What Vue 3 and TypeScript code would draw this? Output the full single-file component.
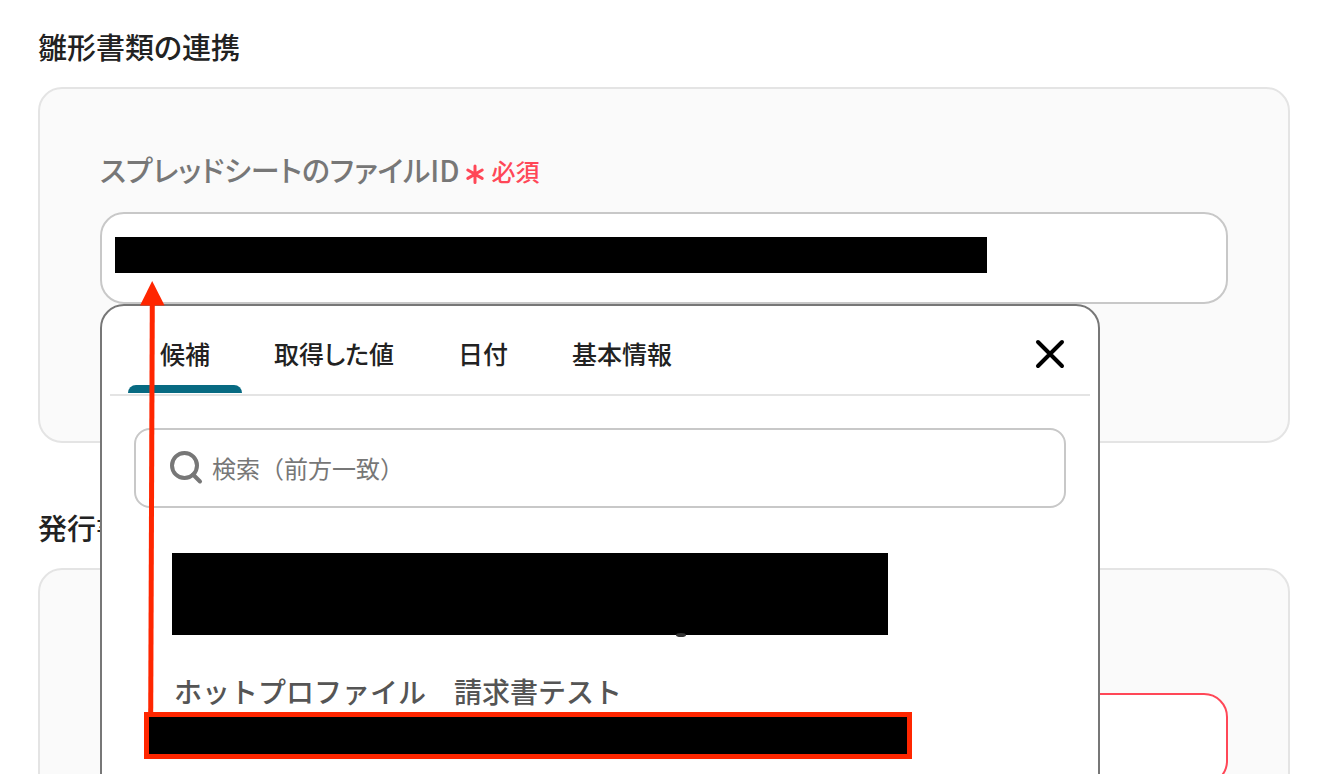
<script setup lang="ts">
import { ref } from 'vue'

const tabs: string[] = ['候補', '取得した値', '日付', '基本情報']
const activeTab = ref<string>('候補')
const fileId = ref<string>('')
const issueValue = ref<string>('')
const keyword = ref<string>('')
const open = ref<boolean>(true)
</script>

<template>
  <main class="page">
    <section class="section">
      <h2 class="heading">雛形書類の連携</h2>
      <div class="panel">
        <div class="label-row">
          <label for="file-id" class="label">スプレッドシートのファイルID</label>
          <span class="required">
            <svg class="asterisk" viewBox="0 0 20 20" aria-hidden="true">
              <path d="M10 2V18.5M2.8 6L17.2 14.4M17.2 6L2.8 14.4" />
            </svg>
            必須
          </span>
        </div>
        <div class="field">
          <input id="file-id" v-model="fileId" class="text-input" type="text" />
          <span class="mask mask-input"></span>

          <div v-if="open" class="popover">
            <div class="tab-bar">
              <div class="tabs" role="tablist">
                <button
                  v-for="tab in tabs"
                  :key="tab"
                  type="button"
                  role="tab"
                  class="tab"
                  :class="{ active: tab === activeTab }"
                  :aria-selected="tab === activeTab"
                  @click="activeTab = tab"
                >
                  {{ tab }}
                </button>
              </div>
              <button type="button" class="close" aria-label="閉じる" @click="open = false">
                <svg viewBox="0 0 32 32" aria-hidden="true">
                  <path d="M4 4L28 28M28 4L4 28" />
                </svg>
              </button>
            </div>

            <div class="search">
              <svg class="search-icon" viewBox="0 0 34 34" aria-hidden="true">
                <circle cx="15.5" cy="14.5" r="12.5" />
                <path d="M24 23.5L31 30.5" />
              </svg>
              <input v-model="keyword" class="search-input" type="text" placeholder="検索（前方一致）" aria-label="検索（前方一致）" />
            </div>

            <ul class="results">
              <li class="result masked"></li>
              <li class="result">
                <p class="result-title">ホットプロファイル　請求書テスト</p>
                <div class="result-value"></div>
              </li>
            </ul>

            <svg class="arrow" viewBox="0 0 28 440" aria-hidden="true">
              <path class="shaft" d="M12.3 22L10.7 436" />
              <path class="head" d="M12.2 1L24.6 25.5H0Z" />
            </svg>
          </div>
        </div>
      </div>
    </section>

    <section class="section">
      <h2 class="heading">発行書類の連携</h2>
      <div class="panel">
        <div class="label-row"></div>
        <div class="field">
          <input v-model="issueValue" class="text-input invalid" type="text" aria-label="発行書類" aria-invalid="true" />
        </div>
      </div>
    </section>
  </main>
</template>

<style>
body {
  margin: 0;
  background: #fff;
}
</style>

<style scoped>
.page {
  box-sizing: border-box;
  height: 100vh;
  overflow: hidden;
  padding: 27px 48px 0 38px;
  color: #222;
  font-family: "Noto Sans CJK JP", "Noto Sans", sans-serif;
  font-weight: 500;
}

.section {
  margin-bottom: 65px;
}

.heading {
  margin: 0 0 22px;
  font-size: 29px;
  line-height: 38px;
  font-weight: 500;
  font-feature-settings: "palt";
}

.panel {
  padding: 60px 60px 137px;
  border: 2px solid #e4e4e4;
  border-radius: 24px;
  background: #fafafa;
}

.label-row {
  display: flex;
  align-items: center;
  gap: 6px;
  min-height: 40px;
  margin-bottom: 23px;
}

.label {
  color: #777;
  font-size: 29px;
  line-height: 40px;
  font-feature-settings: "palt";
}

.required {
  display: flex;
  align-items: center;
  gap: 6px;
  padding-top: 4px;
  color: #ff4757;
  font-size: 24px;
  line-height: 36px;
}

.asterisk {
  width: 20px;
  height: 20px;
  margin-top: 6px;
  fill: none;
  stroke: currentColor;
  stroke-width: 3;
  stroke-linecap: round;
}

.field {
  position: relative;
}

.text-input {
  display: block;
  box-sizing: border-box;
  width: 100%;
  height: 92px;
  padding: 0 16px;
  border: 2px solid #c8c8c8;
  border-radius: 24px;
  outline: none;
  background: #fff;
  color: #222;
  font: inherit;
  font-size: 28px;
}

.text-input.invalid {
  border-color: #ff4757;
}

.mask {
  position: absolute;
  background: #000;
}

.mask-input {
  top: 25px;
  left: 15px;
  width: 872px;
  height: 36px;
}

.popover {
  position: absolute;
  z-index: 2;
  top: 100%;
  left: 0;
  box-sizing: border-box;
  width: calc(100% - 128px);
  padding: 0 8px 64px;
  border: 2px solid #777;
  border-radius: 24px;
  background: #fff;
}

.tab-bar {
  display: flex;
  align-items: center;
  justify-content: space-between;
  padding: 0 24px 0 18px;
  border-bottom: 2px solid #e4e4e4;
}

.tabs {
  display: flex;
}

.tab {
  position: relative;
  height: 88px;
  padding: 6px 32px 0;
  border: 0;
  background: none;
  color: #222;
  font: inherit;
  font-size: 25px;
  line-height: 36px;
  font-feature-settings: "palt";
}

.tab.active::after {
  content: "";
  position: absolute;
  right: 0;
  bottom: 1px;
  left: 0;
  height: 8px;
  border-radius: 8px 8px 0 0;
  background: #076a82;
}

.close {
  width: 32px;
  height: 32px;
  margin-top: 8px;
  padding: 0;
  border: 0;
  background: none;
}

.close svg {
  display: block;
  fill: none;
  stroke: #000;
  stroke-width: 4;
  stroke-linecap: round;
}

.search {
  display: flex;
  align-items: center;
  gap: 9px;
  box-sizing: border-box;
  height: 80px;
  margin: 32px 24px 45px;
  padding: 0 33px;
  border: 2px solid #c8c8c8;
  border-radius: 16px;
}

.search-icon {
  flex: none;
  width: 34px;
  height: 34px;
  fill: none;
  stroke: #777;
  stroke-width: 4;
  stroke-linecap: round;
}

.search-input {
  flex: 1;
  min-width: 0;
  padding: 0;
  border: 0;
  outline: none;
  background: none;
  color: #222;
  font: inherit;
  font-size: 24px;
  font-weight: 400;
  line-height: 36px;
}

.search-input::placeholder {
  color: #777;
  opacity: 1;
}

.results {
  display: flex;
  flex-direction: column;
  gap: 37px;
  margin: 0;
  padding: 0 62px;
  list-style: none;
}

.masked {
  position: relative;
  width: 716px;
  max-width: 100%;
  height: 82px;
  background: #000;
}

/* descender that shows under the masked text */
.masked::after {
  content: "";
  position: absolute;
  bottom: -2px;
  left: 504px;
  width: 10px;
  height: 4px;
  border-radius: 50%;
  background: #333;
}

.result-title {
  margin: 0 0 2px;
  padding-left: 2px;
  color: #555;
  font-size: 28px;
  line-height: 38px;
  font-weight: 500;
}

.result-value {
  box-sizing: border-box;
  width: 768px;
  height: 47px;
  margin-left: -28px;
  border: 5px solid #ff2600;
  background: #000;
}

.arrow {
  position: absolute;
  top: -26px;
  left: 38px;
  width: 28px;
  height: 440px;
  pointer-events: none;
}

.shaft {
  fill: none;
  stroke: #ff2600;
  stroke-width: 5;
}

.head {
  fill: #ff2600;
}
</style>
